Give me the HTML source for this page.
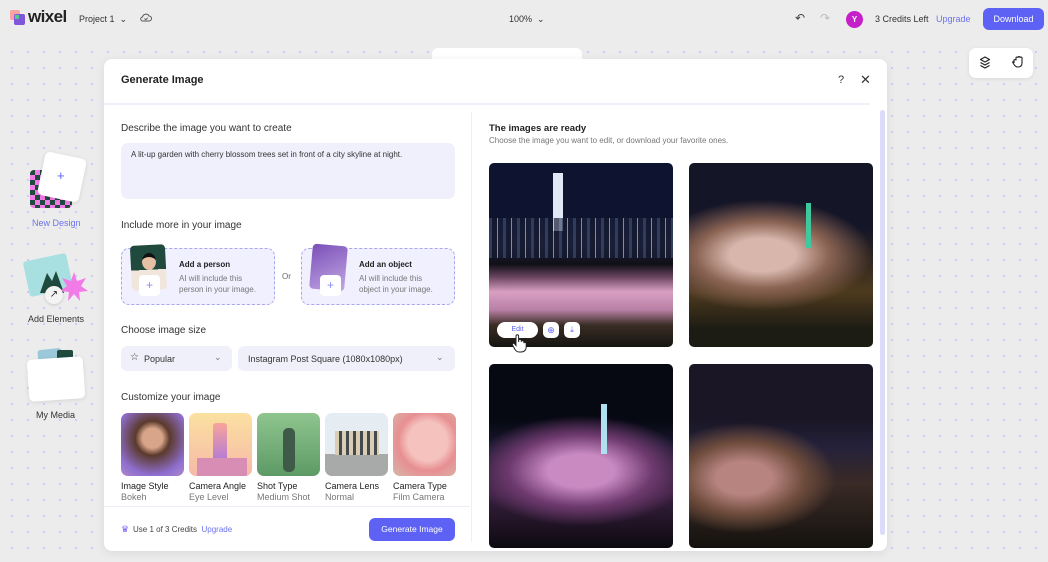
<!DOCTYPE html>
<html><head><meta charset="utf-8"><style>
*{box-sizing:border-box;margin:0;padding:0}
body{width:1048px;height:562px;overflow:hidden;background:#ececec;font-family:"Liberation Sans",sans-serif;color:#222;position:relative}
.dots{position:absolute;left:0;top:40px;width:1048px;height:522px;background-image:radial-gradient(circle,#c9c6ee 0.9px,transparent 1.2px);background-size:16px 16px;background-position:4px 4px}
.abs{position:absolute}
.t{position:absolute;white-space:nowrap}
.card{position:absolute;border:1px dashed #a9a6f0;background:#f0f0ff;border-radius:8px}
.sel{position:absolute;background:#f0f0fb;border-radius:6px;font-size:9px;color:#333}
.thumb{position:absolute;top:413px;width:63px;height:63px;border-radius:7px;overflow:hidden}
.lbl{position:absolute;top:481px;font-size:9px;color:#222;line-height:11px}
.lbl span{display:block;color:#777}
.img{position:absolute;width:184px;height:184px;border-radius:5px;overflow:hidden}
</style></head><body>
<div class="dots"></div>
<!-- top bar -->
<div class="abs" style="left:10px;top:10px;width:10px;height:10px;background:#f7a3a3;border-radius:2px"></div>
<div class="abs" style="left:14px;top:14px;width:11px;height:11px;background:#7f55d9;border-radius:2px"></div>
<div class="abs" style="left:15px;top:15px;width:4px;height:4px;background:#4cd08a"></div>
<div class="t" style="left:28px;top:7px;font-size:17px;font-weight:bold;color:#222;letter-spacing:-0.6px">wixel</div>
<div class="t" style="left:79px;top:14px;font-size:9px;color:#333">Project 1 &nbsp;⌄</div>
<svg class="abs" style="left:140px;top:13px" width="12" height="10" viewBox="0 0 12 10"><path d="M3 8h6a2.5 2.5 0 0 0 0-5 3.5 3.5 0 0 0-6.5 1A2 2 0 0 0 3 8z" fill="none" stroke="#555" stroke-width="1"/><path d="M4.5 5.5l1.3 1.2 2-2" fill="none" stroke="#555" stroke-width="0.9"/></svg>
<div class="t" style="left:509px;top:14px;font-size:9px;color:#333">100% &nbsp;⌄</div>
<div class="t" style="left:795px;top:11px;font-size:12px;color:#444">↶</div>
<div class="t" style="left:820px;top:11px;font-size:12px;color:#bbb">↷</div>
<div class="abs" style="left:846px;top:11px;width:17px;height:17px;border-radius:50%;background:#c41fc9;color:#fff;font-size:8px;text-align:center;line-height:17px;font-weight:bold">Y</div>
<div class="t" style="left:875px;top:14px;font-size:9px;color:#333">3 Credits Left</div>
<div class="t" style="left:936px;top:14px;font-size:9px;color:#6b73f0">Upgrade</div>
<div class="abs" style="left:983px;top:8px;width:61px;height:22px;border-radius:6px;background:#5d62f5;color:#fff;font-size:9px;text-align:center;line-height:22px">Download</div>
<!-- floating right toolbar -->
<div class="abs" style="left:969px;top:48px;width:64px;height:30px;background:#fff;border-radius:7px;box-shadow:0 1px 4px rgba(0,0,0,.08)"></div>
<svg class="abs" style="left:979px;top:56px" width="12" height="13" viewBox="0 0 12 13"><path d="M6 1L1.5 3.5 6 6l4.5-2.5zM1.5 6.5L6 9l4.5-2.5M1.5 9.5L6 12l4.5-2.5" fill="none" stroke="#222" stroke-width="1.2" stroke-linejoin="round"/></svg>
<svg class="abs" style="left:1011px;top:55px" width="14" height="14" viewBox="0 0 14 14"><path d="M3 8V5.5a1 1 0 0 1 2 0V3a1 1 0 0 1 2 0v-.5a1 1 0 0 1 2 0V3a1 1 0 0 1 2 0v5c0 2.5-1.5 4-4 4H6.5C5 12 4 11 3 9.5L1.8 7.5a1 1 0 0 1 1.2-1.3" fill="none" stroke="#222" stroke-width="1.1"/></svg>
<!-- panel behind modal -->
<div class="abs" style="left:432px;top:48px;width:150px;height:20px;background:#fff;border-radius:6px"></div>
<!-- left sidebar -->
<div class="abs" style="left:30px;top:170px;width:42px;height:38px;border-radius:4px;background:repeating-conic-gradient(#f27be8 0 25%,#1f4a3d 0 50%) 0 0/10px 10px"></div>
<div class="abs" style="left:41px;top:155px;width:42px;height:44px;border-radius:5px;background:#fff;transform:rotate(12deg);box-shadow:0 1px 4px rgba(0,0,0,.12)"></div>
<div class="t" style="left:57px;top:168px;font-size:13px;color:#5d62f5">+</div>
<div class="t" style="left:32px;top:218px;font-size:9px;color:#6b73f0">New Design</div>
<div class="abs" style="left:26px;top:257px;width:44px;height:36px;background:#a8dfe0;transform:rotate(-12deg);border-radius:3px"></div>
<svg class="abs" style="left:38px;top:265px" width="30" height="28"><path d="M2 28L9 8l5 8 4-10 8 22z" fill="#1f4a3d"/></svg>
<svg class="abs" style="left:60px;top:272px" width="28" height="30"><path d="M14 0l3 9 9-3-5 8 7 5-9 1 1 9-6-7-6 7 1-9-9-1 7-5-5-8 9 3z" fill="#f27be8"/></svg>
<div class="abs" style="left:45px;top:286px;width:18px;height:18px;border-radius:50%;background:#f4f4f4;box-shadow:0 1px 3px rgba(0,0,0,.15);font-size:10px;text-align:center;line-height:18px">↗</div>
<div class="t" style="left:28px;top:314px;font-size:9px;color:#333">Add Elements</div>
<div class="abs" style="left:38px;top:349px;width:24px;height:16px;background:#9cc9d9;border-radius:3px;transform:rotate(-6deg)"></div>
<div class="abs" style="left:57px;top:350px;width:16px;height:14px;background:#1f4a3d;border-radius:2px"></div>
<div class="abs" style="left:28px;top:358px;width:56px;height:42px;background:#fff;border-radius:5px;transform:rotate(-4deg);box-shadow:0 1px 4px rgba(0,0,0,.1)"></div>
<div class="t" style="left:36px;top:410px;font-size:9px;color:#333">My Media</div>
<!-- modal -->
<div class="abs" style="left:104px;top:59px;width:783px;height:492px;background:#fff;border-radius:8px;box-shadow:0 2px 10px rgba(0,0,0,.08)"></div>
<div class="t" style="left:121px;top:74px;font-size:11px;font-weight:bold;color:#222">Generate Image</div>
<div class="t" style="left:838px;top:74px;font-size:11px;color:#333">?</div>
<div class="t" style="left:860px;top:72px;font-size:13px;color:#333">✕</div>
<div class="abs" style="left:104px;top:103px;width:766px;height:2px;background:#eeeefc"></div>
<div class="abs" style="left:471px;top:112px;width:1px;height:430px;background:#f0f0f4"></div>
<div class="abs" style="left:880px;top:110px;width:5px;height:425px;background:#dcdcfa;border-radius:3px"></div>
<!-- left col -->
<div class="t" style="left:121px;top:123px;font-size:10px;color:#333">Describe the image you want to create</div>
<div class="abs" style="left:121px;top:143px;width:334px;height:56px;background:#f0f0fd;border-radius:7px"></div>
<div class="t" style="left:131px;top:150px;font-size:8px;color:#333">A lit-up garden with cherry blossom trees set in front of a city skyline at night.</div>
<div class="t" style="left:121px;top:220px;font-size:10px;color:#333">Include more in your image</div>
<div class="card" style="left:121px;top:248px;width:154px;height:57px"></div>
<div class="abs" style="left:131px;top:245px;width:35px;height:45px;border-radius:4px;background:linear-gradient(#1f4a3d 0 55%,#f1e6dc 55%);transform:rotate(-3deg)"></div>
<div class="abs" style="left:142px;top:253px;width:14px;height:17px;border-radius:50%;background:#e6c0a4;border-top:4px solid #111"></div>
<div class="abs" style="left:139px;top:275px;width:21px;height:21px;background:#fff;border-radius:4px;color:#8a8ef5;font-size:12px;text-align:center;line-height:21px">+</div>
<div class="t" style="left:179px;top:260px;font-size:8px;font-weight:bold;color:#222">Add a person</div>
<div class="t" style="left:179px;top:273px;font-size:8px;color:#777;line-height:11px">AI will include this<br>person in your image.</div>
<div class="t" style="left:282px;top:272px;font-size:8px;color:#666">Or</div>
<div class="card" style="left:301px;top:248px;width:154px;height:57px"></div>
<div class="abs" style="left:311px;top:245px;width:35px;height:45px;border-radius:4px;background:linear-gradient(150deg,#7b4fb8,#c2a8e4);transform:rotate(5deg)"></div>
<div class="abs" style="left:320px;top:275px;width:21px;height:21px;background:#fff;border-radius:4px;color:#8a8ef5;font-size:12px;text-align:center;line-height:21px">+</div>
<div class="t" style="left:359px;top:260px;font-size:8px;font-weight:bold;color:#222">Add an object</div>
<div class="t" style="left:359px;top:273px;font-size:8px;color:#777;line-height:11px">AI will include this<br>object in your image.</div>
<div class="t" style="left:121px;top:325px;font-size:10px;color:#333">Choose image size</div>
<div class="sel" style="left:121px;top:346px;width:111px;height:25px"><span class="t" style="left:9px;top:6px;font-size:10px">☆</span><span class="t" style="left:23px;top:8px">Popular</span><span class="t" style="left:93px;top:6px;color:#777">⌄</span></div>
<div class="sel" style="left:238px;top:346px;width:217px;height:25px"><span class="t" style="left:10px;top:8px">Instagram Post Square (1080x1080px)</span><span class="t" style="left:198px;top:6px;color:#777">⌄</span></div>
<div class="t" style="left:121px;top:392px;font-size:10px;color:#333">Customize your image</div>
<div class="thumb" style="left:121px;background:radial-gradient(circle at 50% 40%,#d9a58a 0 20%,#5b3a2c 35%,#8f6fd0 75%,#b088c8)"></div>
<div class="thumb" style="left:189px;background:linear-gradient(#fbe1a0,#f6b9a8);"><div class="abs" style="left:24px;top:10px;width:14px;height:38px;border-radius:3px;background:linear-gradient(#f9a49a,#b27ad6)"></div><div class="abs" style="left:8px;top:45px;width:50px;height:18px;background:#d88db5"></div></div>
<div class="thumb" style="left:257px;background:linear-gradient(#8fc58f,#5d9a65)"><div class="abs" style="left:26px;top:15px;width:12px;height:44px;border-radius:5px;background:#3f5a48"></div></div>
<div class="thumb" style="left:325px;background:linear-gradient(#e6edf2 0 65%,#a8aaa9 65%)"><div class="abs" style="left:10px;top:18px;width:44px;height:24px;background:repeating-linear-gradient(90deg,#d9cdb4 0 4px,#44494d 4px 7px)"></div></div>
<div class="thumb" style="left:393px;background:radial-gradient(circle at 55% 45%,#f5c2bd 0 40%,#e78f92 60%,#d6b8a8)"></div>
<div class="lbl" style="left:121px">Image Style<span>Bokeh</span></div>
<div class="lbl" style="left:189px">Camera Angle<span>Eye Level</span></div>
<div class="lbl" style="left:257px">Shot Type<span>Medium Shot</span></div>
<div class="lbl" style="left:325px">Camera Lens<span>Normal</span></div>
<div class="lbl" style="left:393px">Camera Type<span>Film Camera</span></div>
<div class="abs" style="left:104px;top:506px;width:366px;height:1px;background:#eeeefb"></div>
<div class="t" style="left:121px;top:524px;font-size:9px;color:#7b5cf5">♛</div>
<div class="t" style="left:133px;top:525px;font-size:8px;color:#444">Use 1 of 3 Credits &nbsp;<span style="color:#6b73f0">Upgrade</span></div>
<div class="abs" style="left:369px;top:518px;width:86px;height:23px;border-radius:6px;background:#5d62f5;color:#fff;font-size:8.5px;text-align:center;line-height:23px">Generate Image</div>
<!-- right col -->
<div class="t" style="left:489px;top:123px;font-size:9.5px;font-weight:bold;color:#222">The images are ready</div>
<div class="t" style="left:489px;top:136px;font-size:8px;color:#777">Choose the image you want to edit, or download your favorite ones.</div>
<div class="img" style="left:489px;top:163px;background:linear-gradient(#0e1430 0 30%,#1a1e34 45%,#101018 55%,#6b4560 62%,#d9a0c4 70%,#b77fa3 80%,#3a2e26 88%,#15140f)">
<div class="abs" style="left:64px;top:10px;width:10px;height:58px;background:#dfe8f5"></div>
<div class="abs" style="left:0;top:55px;width:184px;height:40px;background:repeating-linear-gradient(90deg,#3b4c70 0 3px,#151a30 3px 8px,#d9bb74 8px 9px,#1a1e38 9px 14px);opacity:.7"></div></div>
<div class="abs" style="left:497px;top:322px;width:41px;height:16px;border-radius:8px;background:#fff;color:#5d62f5;font-size:7px;text-align:center;line-height:16px">Edit</div>
<div class="abs" style="left:543px;top:322px;width:16px;height:16px;border-radius:5px;background:#fff;color:#5d62f5;font-size:9px;text-align:center;line-height:16px">⊕</div>
<div class="abs" style="left:564px;top:322px;width:16px;height:16px;border-radius:5px;background:#fff;color:#5d62f5;font-size:8px;text-align:center;line-height:16px">⤓</div>
<div class="img" style="left:689px;top:163px;background:radial-gradient(ellipse 60% 30% at 40% 50%,#d8b6ac 0 30%,#8b6454 60%,transparent 100%),linear-gradient(#141527 0 35%,#2b2320 50%,#4e3a1e 70%,#1d1c14 90%)"><div class="abs" style="left:117px;top:40px;width:5px;height:45px;background:#3fc79d"></div></div>
<div class="img" style="left:489px;top:364px;background:radial-gradient(ellipse 60% 30% at 50% 58%,#c98ac2 0 30%,#6e3a6e 65%,transparent 100%),linear-gradient(#060812 0 30%,#1a1830 45%,#3a2040 70%,#0c0a10)"><div class="abs" style="left:112px;top:40px;width:6px;height:50px;background:#aee0ef"></div></div>
<div class="img" style="left:689px;top:364px;background:radial-gradient(ellipse 50% 30% at 30% 62%,#b88480 0 30%,#6e4c3c 65%,transparent 100%),linear-gradient(#1a1626 0 30%,#24213a 45%,#3a2a26 65%,#14120e)"></div>
<svg class="abs" style="left:511px;top:334px" width="16" height="20" viewBox="0 0 16 20"><path d="M5 2a1.3 1.3 0 0 1 2.6 0v6l.1-1.5a1.3 1.3 0 0 1 2.6.3v1a1.3 1.3 0 0 1 2.6.3v1a1.2 1.2 0 0 1 2.3.4V13c0 3-2 5-5 5H8c-2 0-3-1-4-2.5L1.5 11a1.2 1.2 0 0 1 2-1.3L5 11.5z" fill="#fff" stroke="#222" stroke-width="1"/></svg>
</body></html>
